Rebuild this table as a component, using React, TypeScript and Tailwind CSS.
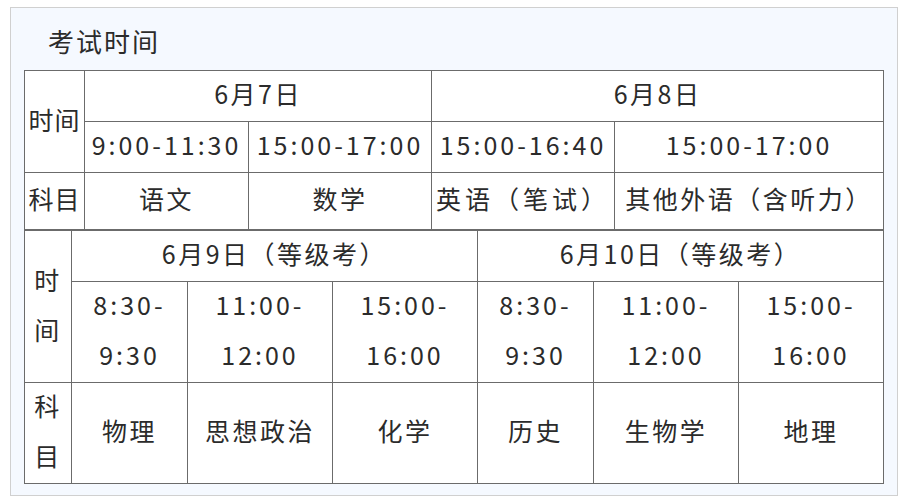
const font = { fontFamily: '"Noto Sans CJK SC", "Microsoft YaHei", sans-serif' };

function Cell({ children, className = "", ...rest }: any) {
  return (
    <td
      className={"border border-[#6b6b6b] text-center align-middle p-0 " + className}
      {...rest}
    >
      <div className="-mt-[6px]">{children}</div>
    </td>
  );
}

function TopTable() {
  return (
    <table className="w-[859px] table-fixed border-collapse bg-white text-[25px] leading-[50px] tracking-[2.5px] text-[#2b2b2b]">
      <colgroup>
        <col className="w-[60px]" />
        <col className="w-[164px]" />
        <col className="w-[183px]" />
        <col className="w-[183px]" />
        <col className="w-[269px]" />
      </colgroup>
      <tbody>
        <tr className="h-[51px]">
          <Cell rowSpan={2} className="tracking-[1px]">时间</Cell>
          <Cell colSpan={2}>6月7日</Cell>
          <Cell colSpan={2}>6月8日</Cell>
        </tr>
        <tr className="h-[51px]">
          <Cell className="whitespace-nowrap tracking-[3px]">9:00-11:30</Cell>
          <Cell className="whitespace-nowrap tracking-[3px]">15:00-17:00</Cell>
          <Cell className="whitespace-nowrap tracking-[3px]">15:00-16:40</Cell>
          <Cell className="whitespace-nowrap tracking-[3px]">15:00-17:00</Cell>
        </tr>
        <tr className="h-[57px]">
          <Cell className="tracking-[1px]">科目</Cell>
          <Cell>语文</Cell>
          <Cell>数学</Cell>
          <Cell className="whitespace-nowrap tracking-[4px]">英语（笔试）</Cell>
          <Cell className="whitespace-nowrap">其他外语（含听力）</Cell>
        </tr>
      </tbody>
    </table>
  );
}

const days = [
  {
    date: "6月9日（等级考）",
    slots: [
      ["8:30-", "9:30", "物理"],
      ["11:00-", "12:00", "思想政治"],
      ["15:00-", "16:00", "化学"],
    ],
  },
  {
    date: "6月10日（等级考）",
    slots: [
      ["8:30-", "9:30", "历史"],
      ["11:00-", "12:00", "生物学"],
      ["15:00-", "16:00", "地理"],
    ],
  },
];

function BottomTable() {
  return (
    <table className="w-[859px] table-fixed border-collapse bg-white text-[25px] leading-[50px] tracking-[2.5px] text-[#2b2b2b]">
      <colgroup>
        <col className="w-[47px]" />
        <col className="w-[116px]" />
        <col className="w-[145px]" />
        <col className="w-[145px]" />
        <col className="w-[116px]" />
        <col className="w-[145px]" />
        <col className="w-[145px]" />
      </colgroup>
      <tbody>
        <tr className="h-[51px]">
          <Cell rowSpan={2}>
            时<br />间
          </Cell>
          {days.map((d) => (
            <Cell key={d.date} colSpan={3} className="whitespace-nowrap">
              {d.date}
            </Cell>
          ))}
        </tr>
        <tr className="h-[101px]">
          {days.map((d) =>
            d.slots.map((s, i) => (
              <Cell key={d.date + i} className="tracking-[3px]">
                {s[0]}
                <br />
                {s[1]}
              </Cell>
            ))
          )}
        </tr>
        <tr className="h-[101px]">
          <Cell>
            科<br />目
          </Cell>
          {days.map((d) =>
            d.slots.map((s, i) => (
              <Cell key={d.date + "s" + i} className="whitespace-nowrap">
                {s[2]}
              </Cell>
            ))
          )}
        </tr>
      </tbody>
    </table>
  );
}

export default function App() {
  return (
    <div className="w-[904px] h-[501px] bg-white pt-[7px] pl-[10px]" style={font}>
      <div className="w-[888px] h-[489px] border border-[#d0d0d0] bg-[#f5f9ff] px-[13px]">
        <div className="h-[62px] pl-[24px] pt-[15px] text-[26px] leading-[36px] tracking-[2px] text-[#2b2b2b]">
          考试时间
        </div>
        <TopTable />
        <BottomTable />
      </div>
    </div>
  );
}
